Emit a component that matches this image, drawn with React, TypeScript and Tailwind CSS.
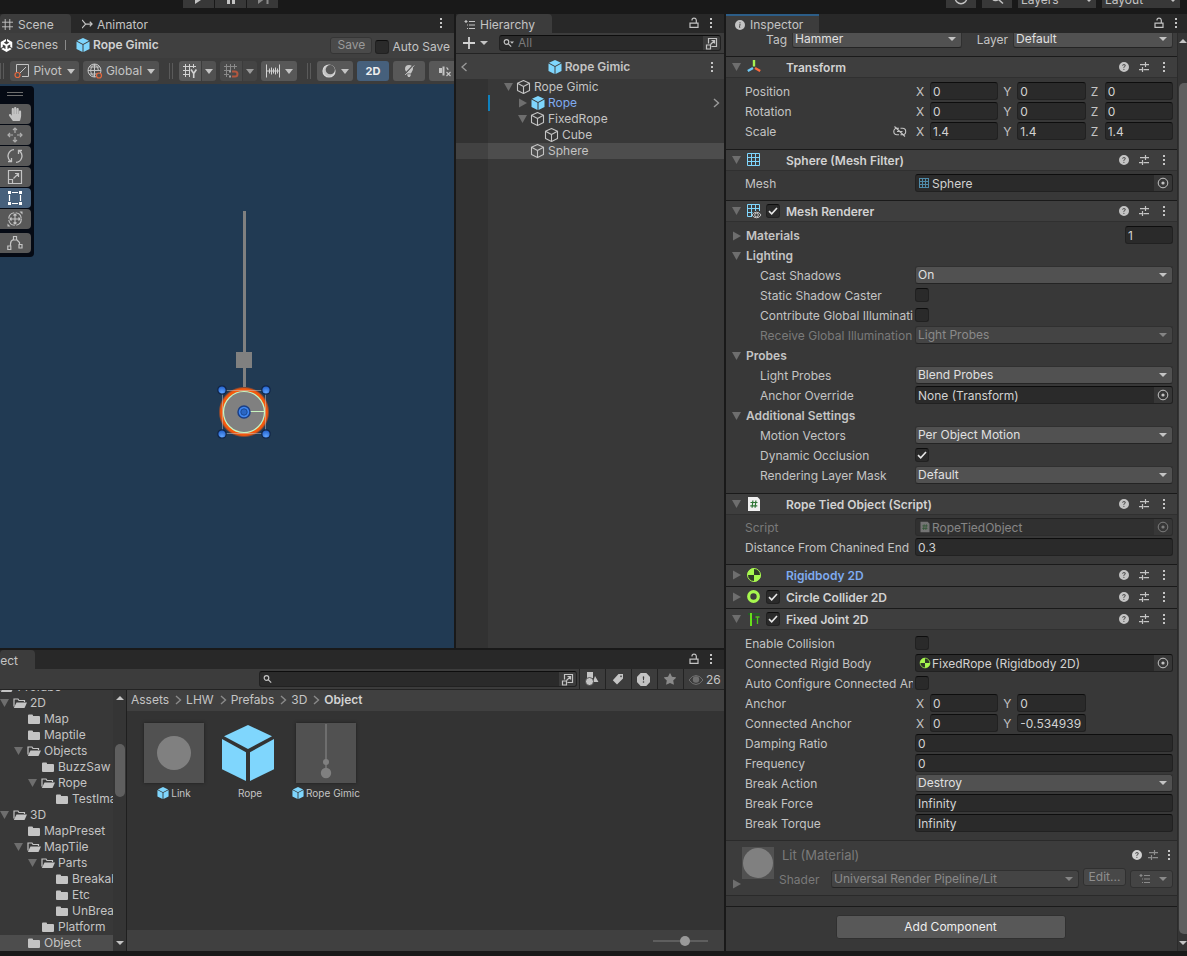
import { useId, useState, type ReactNode } from "react";
import clsx from "clsx";
import { BsExclamationOctagonFill, BsInfoCircleFill, BsQuestionCircleFill, BsStarFill } from "react-icons/bs";
import { FaHandPaper } from "react-icons/fa";
import { SiUnity } from "react-icons/si";

/* ---------- icons ---------- */

type IconProps = { className?: string };

const Caret = ({ className = "w-2 h-1" }: IconProps) => (
  <svg viewBox="0 0 8 4" className={className} fill="currentColor" preserveAspectRatio="none" aria-hidden>
    <path d="M0 0h8L4 4z" />
  </svg>
);

const Foldout = ({ open, className }: { open: boolean; className?: string }) => (
  <svg viewBox="0 0 10 10" className={clsx("size-2.5 shrink-0 text-[#6e6e6e]", className)} fill="currentColor" aria-hidden>
    {open ? <path d="M0 1h9L4.500 9z" /> : <path d="M1 .5v9l8-4.500z" />}
  </svg>
);

const PrefabCube = ({ className = "size-4" }: IconProps) => (
  <svg viewBox="0 0 52 56" className={clsx("shrink-0", className)} fill="#7fd6fd" aria-hidden>
    <path d="M26 0l24 11.300L26 24 2 11.300z" />
    <path d="M0 14l24 13.300V56L0 44.300z" />
    <path d="M52 14L28 27.300V56l24-11.700z" />
  </svg>
);

const ObjectCube = ({ className = "size-4" }: IconProps) => (
  <svg viewBox="0 0 16 16" className={clsx("shrink-0", className)} fill="none" stroke="#c4c4c4" strokeWidth="1.100" strokeLinejoin="round" aria-hidden>
    <path d="M7.500 1.500l6 2.700v7.300l-6 3-6-3V4.200z" />
    <path d="M1.500 4.200l6 3.300 6-3.300M7.500 7.500v7" />
  </svg>
);

const Folder = ({ open }: { open: boolean }) => (
  <svg viewBox="0 0 14 12" className="h-3 w-3.5 shrink-0" aria-hidden>
    {open ? (
      <>
        <path d="M1 9.500V2h4l1 1.500h5.500V5" fill="none" stroke="#c4c4c4" strokeWidth="1.200" />
        <path d="M3.500 5.500H14L11.500 11H.800z" fill="#c4c4c4" />
      </>
    ) : (
      <path d="M1 2.500q0-1 1-1h3q1 0 1 1v.5h6q1 0 1 1v6q0 1-1 1H2q-1 0-1-1z" fill="#c4c4c4" />
    )}
  </svg>
);

const Dots = ({ className }: IconProps) => (
  <svg viewBox="0 0 4 12" className={clsx("h-3 w-1 shrink-0", className)} fill="#c4c4c4" aria-hidden>
    <path d="M1 1h2v2H1zM1 5h2v2H1zM1 9h2v2H1z" />
  </svg>
);

const Lock = () => (
  <svg viewBox="0 0 10 12" className="h-3 w-2.5" fill="none" stroke="#c4c4c4" strokeWidth="1.200" aria-hidden>
    <path d="M1 6.100h8v4.300H1zM3 3.500V3q0-1.900 2-1.900T7.300 3v3" />
  </svg>
);

const Sliders = ({ className }: IconProps) => (
  <svg viewBox="0 0 12 12" className={clsx("size-3", className)} fill="none" stroke="#c4c4c4" strokeWidth="1.200" aria-hidden>
    <path d="M2 3.600h4.500M6.500 3.600H11M7.500 1v5M1 8.600h3.500M5.500 8.600H11M4.500 6v5" />
  </svg>
);

const Popout = () => (
  <svg viewBox="0 0 13 13" className="size-[13px]" fill="none" stroke="#c4c4c4" strokeWidth="1.200" aria-hidden>
    <path d="M3.500 6.500V1.500h8v8h-5M1.500 8h4v4h-4zM5.500 7.500l4-4M6.500 3.500h3v3" />
  </svg>
);

const Magnifier = ({ caret = false }: { caret?: boolean }) => (
  <svg viewBox="0 0 12 12" className="size-3 shrink-0" fill="none" stroke="#c4c4c4" strokeWidth="1.200" aria-hidden>
    <circle cx="3.500" cy="5" r="2.300" />
    <path d="M5.200 6.700l3 3" />
    {caret && <path d="M7 4.500h4l-2 2.300z" fill="#c4c4c4" stroke="none" />}
  </svg>
);

const TargetDot = () => (
  <svg viewBox="0 0 12 12" className="size-3" aria-hidden>
    <circle cx="6" cy="6" r="4.800" fill="none" stroke="#c4c4c4" />
    <circle cx="6" cy="6" r="1.600" fill="#c4c4c4" />
  </svg>
);

const GridGlyph = ({ className, color = "#7fd6fd" }: { className: string; color?: string }) => (
  <svg viewBox="0 0 14 14" className={className} fill="none" stroke={color} aria-hidden>
    <path d="M.5.5h12v12H.5zM.5 4.500h12M.5 8.500h12M4.500.5v12M8.500.5v12" />
  </svg>
);

const FineGrid = () => (
  <svg viewBox="0 0 10 10" className="mr-0.5 size-2.5" fill="none" stroke="#4f8aa8" aria-hidden>
    <path d="M.5 0v10M3.500 0v10M6.500 0v10M9.500 0v10M0 .5h10M0 3.500h10M0 6.500h10M0 9.500h10" />
  </svg>
);

const AxisIcon = () => (
  <svg viewBox="0 0 16 16" className="size-4" strokeWidth="2.400" fill="none" aria-hidden>
    <path d="M8 1v6.500" stroke="#a7f051" />
    <path d="M7 9L1.800 12" stroke="#6ec8f5" />
    <path d="M9 9l5.200 3" stroke="#ff6a3d" />
  </svg>
);

const RendererIcon = () => (
  <svg viewBox="0 0 16 16" className="size-4" fill="none" aria-hidden>
    <path d="M6 13.500H1.500V1.500h12v6.500M1.500 5.500h12M1.500 9.500h5M5.500 1.500v12M9.500 1.500v6.500" stroke="#7fd6fd" />
    <path d="M6 12q1.500-2.800 4.500-2.800T15 12q-1.500 2.800-4.500 2.800T6 12z" fill="#3e3e3e" stroke="#c4c4c4" />
    <circle cx="10.500" cy="12" r="1.800" stroke="#c4c4c4" />
  </svg>
);

const ScriptIcon = ({ className = "size-4", faded = false }: { className?: string; faded?: boolean }) => (
  <svg viewBox="0 0 16 16" className={className} aria-hidden>
    <path d="M2 1h9.500L14 3.500V15H2z" fill={faded ? "#b0b0b0" : "#f0f0f0"} />
    <path d="M4.500 6.500h7M4.300 9.800h7M6.900 4.500l-.8 7.300M9.900 4.500l-.8 7.300" stroke="#2f7536" strokeWidth="1.200" />
  </svg>
);

const BodyIcon = ({ className = "size-4" }: IconProps) => (
  <svg viewBox="0 0 16 16" className={className} aria-hidden>
    <circle cx="8" cy="8" r="6.500" fill="#303a28" stroke="#a7f84f" />
    <path d="M8 8V1.200A6.800 6.800 0 0 0 1.200 8zM8 8v6.800A6.800 6.800 0 0 0 14.800 8z" fill="#a7f84f" />
  </svg>
);

const RingIcon = () => (
  <svg viewBox="0 0 16 16" className="size-4" aria-hidden>
    <circle cx="7.500" cy="7.500" r="4.800" fill="none" stroke="#a7f84f" strokeWidth="3.200" />
  </svg>
);

const JointIcon = () => (
  <svg viewBox="0 0 16 16" className="size-4" fill="none" aria-hidden>
    <path d="M2 3h12M4 8.500h6" stroke="#0f7a10" />
    <path d="M5 2v13" stroke="#68e01c" strokeWidth="2" />
    <path d="M11.500 5.500v7.500M9.500 6h4" stroke="#4fc81a" strokeWidth="1.300" />
  </svg>
);

const UnlinkIcon = () => (
  <svg viewBox="0 0 14 12" className="h-3 w-3.5" fill="none" stroke="#c4c4c4" strokeWidth="1.100" aria-hidden>
    <path d="M6 2.300H4a3.200 3.200 0 0 0 0 6.400h2M7.500 2.300H9.500a3.200 3.200 0 0 1 0 6.400h-2M4 5.500h5.500M1.500.5L12 10.500" />
  </svg>
);

const ListIcon = () => (
  <svg viewBox="0 0 12 12" className="size-3" fill="none" stroke="currentColor" strokeWidth="1.200" aria-hidden>
    <path d="M.5 2.500h3M5 2.500h6M5 6h6M5 9.500h6M2 1v3M3 6h1M3 9.500h1" />
  </svg>
);

const SphereBall = ({ size }: { size: string }) => (
  <svg viewBox="0 0 20 20" className={size} aria-hidden>
    <circle cx="10" cy="10" r="10" fill="#808080" />
  </svg>
);

/* ---------- basic controls ---------- */

const fieldBox = "rounded-[3px] border border-[#212121] border-t-[#0d0d0d] bg-[#2a2a2a]";

function TextField({ id, value, label, className }: { id?: string; value: string; label?: string; className?: string }) {
  return (
    <input
      id={id}
      aria-label={label}
      defaultValue={value}
      className={clsx("h-[18px] min-w-0 px-[2px] text-[#d2d2d2] outline-none focus:border-[#3a79bb]", fieldBox, className)}
    />
  );
}

function Dropdown({ id, value, disabled, label, className }: { id?: string; value: string; disabled?: boolean; label?: string; className?: string }) {
  return (
    <div className={clsx("grid h-[18px] min-w-0 items-center", disabled ? "text-[#8a8a8a]" : "text-[#e0e0e0]", className)}>
      <select
        id={id}
        aria-label={label}
        disabled={disabled}
        className={clsx(
          "col-start-1 row-start-1 h-[18px] w-full appearance-none rounded-[3px] border border-[#303030] border-b-[#242424] pr-4 pl-[2px] leading-4 outline-none",
          disabled ? "bg-[#444444]" : "bg-[#515151]",
        )}
      >
        <option>{value}</option>
      </select>
      <Caret className={clsx("pointer-events-none col-start-1 row-start-1 mr-[6px] h-1 w-2 justify-self-end", disabled ? "text-[#858585]" : "text-[#c4c4c4]")} />
    </div>
  );
}

function Toggle({ id, checked = false, label }: { id?: string; checked?: boolean; label?: string }) {
  const [on, setOn] = useState(checked);
  return (
    <span className="grid size-3.5 shrink-0 place-items-center">
      <input
        id={id}
        type="checkbox"
        aria-label={label}
        checked={on}
        onChange={() => setOn(!on)}
        className={clsx("col-start-1 row-start-1 size-3.5 appearance-none", fieldBox)}
      />
      {on && (
        <svg viewBox="0 0 10 10" className="pointer-events-none col-start-1 row-start-1 size-2.5" fill="none" stroke="#e6e6e6" strokeWidth="1.600" aria-hidden>
          <path d="M1 5.200l2.700 2.600L9 2" />
        </svg>
      )}
    </span>
  );
}

function ObjectField({ id, value, icon, disabled }: { id?: string; value: string; icon?: ReactNode; disabled?: boolean }) {
  return (
    <div className={clsx("flex h-[18px] flex-1 items-center overflow-hidden", fieldBox, disabled && "opacity-50")}>
      {icon && <span className="ml-[3px] shrink-0">{icon}</span>}
      <input id={id} readOnly value={value} className={clsx("min-w-0 flex-1 bg-transparent pt-px text-[#d2d2d2] outline-none", icon ? "pl-px" : "pl-[2px]")} />
      <button aria-label={`Select ${value}`} className="grid h-full w-[18px] place-items-center bg-[#373737]">
        <TargetDot />
      </button>
    </div>
  );
}

/* ---------- inspector ---------- */

function Row({ label, nested, disabled, extra, children }: { label: string; nested?: boolean; disabled?: boolean; extra?: ReactNode; children: (id: string) => ReactNode }) {
  const id = useId();
  return (
    <div className="flex h-5 pr-1">
      <div className={clsx("flex w-[187px] shrink-0 items-center overflow-hidden", nested ? "pl-[34px]" : "pl-[19px]")}>
        <label htmlFor={id} className={clsx("flex-1 whitespace-nowrap", disabled ? "text-[#7a7a7a]" : "text-[#c4c4c4]")}>
          {label}
        </label>
        {extra}
      </div>
      <div className="ml-0.5 flex h-[18px] flex-1 items-center">{children(id)}</div>
    </div>
  );
}

function Vector({ id, label, values }: { id: string; label: string; values: string[] }) {
  return (
    <div className="grid flex-1 grid-cols-3 gap-1">
      {values.map((v, i) => (
        <div key={i} className="flex items-center">
          <span className="w-[15px] shrink-0 pt-0.5 pl-px">{"XYZ"[i]}</span>
          <TextField id={i === 0 ? id : undefined} label={`${label} ${"XYZ"[i]}`} value={v} className="flex-1" />
        </div>
      ))}
    </div>
  );
}

function GroupTitle({ title, open, children }: { title: string; open: boolean; children?: ReactNode }) {
  return (
    <div className="flex h-5 pr-1">
      <button className="flex flex-1 items-center pl-[6px] font-semibold">
        <Foldout open={open} className="mr-1" />
        {title}
      </button>
      {children}
    </div>
  );
}

type SectionProps = {
  title: string;
  icon: ReactNode;
  open?: boolean;
  enabled?: boolean;
  overridden?: boolean;
  body?: string;
  children?: ReactNode;
};

function Section({ title, icon, open = true, enabled, overridden, body = "pt-1 pb-[7px]", children }: SectionProps) {
  return (
    <section className="border-t border-[#1a1a1a]">
      <header className={clsx("flex h-[21px] items-center border-b bg-[#3e3e3e] pl-[6px]", open ? "border-[#303030]" : "border-[#3e3e3e]")}>
        <Foldout open={open} />
        <span className="ml-1 size-4">{icon}</span>
        <span className="ml-1 w-5">{enabled && <Toggle checked label={`Enable ${title}`} />}</span>
        <h2 className={clsx("flex-1 pt-0.5 font-semibold", overridden ? "text-[#7fabf0]" : "text-[#d2d2d2]")}>{title}</h2>
        <div className="flex items-center gap-2 pr-[7px] text-[#c4c4c4]">
          <button aria-label={`${title} help`} className="grid size-3 place-items-center">
            <BsQuestionCircleFill className="size-2.5" />
          </button>
          <button aria-label={`${title} presets`}>
            <Sliders />
          </button>
          <button aria-label={`${title} menu`} className="grid w-3 place-items-center">
            <Dots />
          </button>
        </div>
      </header>
      {children && <div className={body}>{children}</div>}
    </section>
  );
}

function Inspector() {
  return (
    <aside className="flex w-[461px] shrink-0 flex-col overflow-hidden bg-[#383838]">
      <div className="flex h-[19px] shrink-0 items-stretch bg-[#282828]">
        <button className="flex w-[93px] items-center gap-[5px] border-t-2 border-[#2c5d87] bg-[#3c3c3c] pl-[9px]">
          <BsInfoCircleFill className="size-2.5" />
          Inspector
        </button>
        <div className="ml-auto flex items-center gap-2.5 pr-[9px] pb-px">
          <button aria-label="Lock inspector"><Lock /></button>
          <button aria-label="Inspector menu"><Dots /></button>
        </div>
      </div>
      <div className="flex min-h-0 flex-1">
        <div className="min-w-0 flex-1 overflow-hidden border-r border-[#2b2b2b]">
          <div className="flex h-[23px] items-start overflow-hidden bg-[#3c3c3c] pr-1">
            <label htmlFor="tag" className="w-[66px] pr-[5px] text-right leading-[14px]">Tag</label>
            <Dropdown id="tag" value="Hammer" className="-mt-[3px] flex-1" />
            <label htmlFor="layer" className="w-[51px] pr-[5px] text-right leading-[14px]">Layer</label>
            <Dropdown id="layer" value="Default" className="-mt-[3px] w-[160px]" />
          </div>

          <Section title="Transform" icon={<AxisIcon />}>
            <Row label="Position">{(id) => <Vector id={id} label="Position" values={["0", "0", "0"]} />}</Row>
            <Row label="Rotation">{(id) => <Vector id={id} label="Rotation" values={["0", "0", "0"]} />}</Row>
            <Row label="Scale" extra={<span className="mr-[6px]"><UnlinkIcon /></span>}>
              {(id) => <Vector id={id} label="Scale" values={["1.4", "1.4", "1.4"]} />}
            </Row>
          </Section>

          <Section title="Sphere (Mesh Filter)" icon={<GridGlyph className="mt-px ml-px size-3.5" />} body="pt-[3px] pb-[6px]">
            <Row label="Mesh">{(id) => <ObjectField id={id} value="Sphere" icon={<FineGrid />} />}</Row>
          </Section>

          <Section title="Mesh Renderer" icon={<RendererIcon />} enabled>
            <GroupTitle title="Materials" open={false}>
              <TextField label="Materials count" value="1" className="w-12" />
            </GroupTitle>
            <GroupTitle title="Lighting" open />
            <Row label="Cast Shadows" nested>{(id) => <Dropdown id={id} value="On" className="flex-1" />}</Row>
            <Row label="Static Shadow Caster" nested>{(id) => <Toggle id={id} />}</Row>
            <Row label="Contribute Global Illumination" nested>{(id) => <Toggle id={id} />}</Row>
            <Row label="Receive Global Illumination" nested disabled>{(id) => <Dropdown id={id} value="Light Probes" disabled className="flex-1" />}</Row>
            <GroupTitle title="Probes" open />
            <Row label="Light Probes" nested>{(id) => <Dropdown id={id} value="Blend Probes" className="flex-1" />}</Row>
            <Row label="Anchor Override" nested>{(id) => <ObjectField id={id} value="None (Transform)" />}</Row>
            <GroupTitle title="Additional Settings" open />
            <Row label="Motion Vectors" nested>{(id) => <Dropdown id={id} value="Per Object Motion" className="flex-1" />}</Row>
            <Row label="Dynamic Occlusion" nested>{(id) => <Toggle id={id} checked />}</Row>
            <Row label="Rendering Layer Mask" nested>{(id) => <Dropdown id={id} value="Default" className="flex-1" />}</Row>
          </Section>

          <Section title="Rope Tied Object (Script)" icon={<ScriptIcon />} body="pt-[3px] pb-[6px]">
            <Row label="Script" disabled>{(id) => <ObjectField id={id} value="RopeTiedObject" disabled icon={<ScriptIcon className="size-3" faded />} />}</Row>
            <Row label="Distance From Chanined End">{(id) => <TextField id={id} value="0.3" className="flex-1" />}</Row>
          </Section>

          <Section title="Rigidbody 2D" icon={<BodyIcon />} open={false} overridden />
          <Section title="Circle Collider 2D" icon={<RingIcon />} open={false} enabled />

          <Section title="Fixed Joint 2D" icon={<JointIcon />} enabled body="pt-1 pb-[6px]">
            <Row label="Enable Collision">{(id) => <Toggle id={id} />}</Row>
            <Row label="Connected Rigid Body">{(id) => <ObjectField id={id} value="FixedRope (Rigidbody 2D)" icon={<BodyIcon className="size-3" />} />}</Row>
            <Row label="Auto Configure Connected Anchor">{(id) => <Toggle id={id} />}</Row>
            <Row label="Anchor">{(id) => <Vector id={id} label="Anchor" values={["0", "0"]} />}</Row>
            <Row label="Connected Anchor">{(id) => <Vector id={id} label="Connected Anchor" values={["0", "-0.534939"]} />}</Row>
            <Row label="Damping Ratio">{(id) => <TextField id={id} value="0" className="flex-1" />}</Row>
            <Row label="Frequency">{(id) => <TextField id={id} value="0" className="flex-1" />}</Row>
            <Row label="Break Action">{(id) => <Dropdown id={id} value="Destroy" className="flex-1" />}</Row>
            <Row label="Break Force">{(id) => <TextField id={id} value="Infinity" className="flex-1" />}</Row>
            <Row label="Break Torque">{(id) => <TextField id={id} value="Infinity" className="flex-1" />}</Row>
          </Section>

          <section className="flex h-14 border-y border-[#2a2a2a] bg-[#3c3c3c] pr-1 text-[#7a7a7a]">
            <div className="flex w-[53px] shrink-0 items-start pt-[6px] pl-[6px]">
              <Foldout open={false} className="mt-8" />
              <span className="grid size-8 place-items-center bg-[#515151]">
                <SphereBall size="size-[30px]" />
              </span>
            </div>
            <div className="flex flex-1 flex-col">
              <div className="flex h-7 items-center">
                <h2 className="flex-1 pl-[3px] text-[13px]">Lit (Material)</h2>
                <div className="flex items-center gap-[5px] pr-0.5 text-[#d2d2d2]">
                  <button aria-label="Material help"><BsQuestionCircleFill className="size-2.5" /></button>
                  <button aria-label="Material presets"><Sliders className="opacity-60" /></button>
                  <button aria-label="Material menu" className="ml-[3px]"><Dots /></button>
                </div>
              </div>
              <div className="flex h-5 items-center">
                <label htmlFor="shader" className="w-[52px] pt-0.5">Shader</label>
                <Dropdown id="shader" value="Universal Render Pipeline/Lit" disabled className="flex-1" />
                <button className="mx-1 -mt-1 h-[18px] w-[43px] rounded-[3px] border border-[#303030] bg-[#484848] leading-4 text-[#8f8f8f]">Edit...</button>
                <button aria-label="Shader list" className="flex h-[18px] w-[43px] items-center justify-between rounded-[3px] border border-[#303030] bg-[#444444] pr-[5px] pl-2 text-[#8a8a8a]">
                  <ListIcon />
                  <Caret />
                </button>
              </div>
            </div>
          </section>

          <div className="mt-[10px] flex justify-center border-t border-[#1a1a1a] pt-[8px] pr-0.5">
            <button className="h-6 w-[230px] rounded-[3px] border border-[#303030] bg-[#585858] text-[#eeeeee]">Add Component</button>
          </div>
        </div>
        <div className="flex w-[9px] shrink-0 flex-col items-center overflow-hidden bg-[#353535] pt-[6px] pb-[6px]">
          <Caret className="h-1 w-2 shrink-0 rotate-180 text-[#c4c4c4]" />
          <div className="mt-10 mb-[7px] ml-px w-full flex-1 rounded-l-[5px] bg-[#5f5f5f]" />
          <Caret className="h-1 w-2 shrink-0 text-[#c4c4c4]" />
        </div>
      </div>
    </aside>
  );
}

/* ---------- trees ---------- */

const indents = ["pl-0", "pl-3.5", "pl-7", "pl-10.5", "pl-14"];

type Node = { name: string; depth: number; open?: boolean; leaf?: boolean; prefab?: boolean; selected?: boolean };

const hierarchy: Node[] = [
  { name: "Rope Gimic", depth: 1, open: true },
  { name: "Rope", depth: 2, open: false, prefab: true },
  { name: "FixedRope", depth: 2, open: true },
  { name: "Cube", depth: 3, leaf: true },
  { name: "Sphere", depth: 2, leaf: true, selected: true },
];

const folders: Node[] = [
  { name: "2D", depth: 0, open: true },
  { name: "Map", depth: 1, leaf: true },
  { name: "Maptile", depth: 1, leaf: true },
  { name: "Objects", depth: 1, open: true },
  { name: "BuzzSaw", depth: 2, leaf: true },
  { name: "Rope", depth: 2, open: true },
  { name: "TestImage", depth: 3, leaf: true },
  { name: "3D", depth: 0, open: true },
  { name: "MapPreset", depth: 1, leaf: true },
  { name: "MapTile", depth: 1, open: true },
  { name: "Parts", depth: 2, open: true },
  { name: "Breakable", depth: 3, leaf: true },
  { name: "Etc", depth: 3, leaf: true },
  { name: "UnBreakable", depth: 3, leaf: true },
  { name: "Platform", depth: 2, leaf: true },
  { name: "Object", depth: 1, leaf: true, selected: true },
];

function Hierarchy() {
  return (
    <section className="flex w-[268px] shrink-0 flex-col bg-[#383838]">
      <div className="flex h-[19px] items-stretch bg-[#282828]">
        <button className="flex w-24 items-center gap-1 rounded-t-sm bg-[#3c3c3c] pt-0.5 pl-2">
          <ListIcon />
          Hierarchy
        </button>
        <div className="ml-auto flex items-center gap-2.5 pr-[11px] pb-px">
          <button aria-label="Lock hierarchy"><Lock /></button>
          <button aria-label="Hierarchy menu"><Dots /></button>
        </div>
      </div>
      <div className="flex h-[21px] items-center border-b border-[#232323] bg-[#3c3c3c] pr-[3px]">
        <button aria-label="Create" className="flex w-[43px] items-center gap-[5px] pl-[7px]">
          <svg viewBox="0 0 12 12" className="size-3" stroke="#d2d2d2" strokeWidth="1.800" aria-hidden>
            <path d="M6 0v12M0 6h12" />
          </svg>
          <Caret />
        </button>
        <div className={clsx("flex h-4 flex-1 items-center overflow-hidden pl-[3px]", fieldBox)}>
          <Magnifier caret />
          <input placeholder="All" aria-label="Search hierarchy" className="min-w-0 flex-1 bg-transparent pl-[3px] outline-none placeholder:text-[#7a7a7a]" />
          <button aria-label="Open search window" className="grid h-full w-[17px] place-items-center bg-[#3c3c3c]"><Popout /></button>
        </div>
      </div>
      <div className="flex h-[25px] items-center bg-[#404040] pr-[10px] pl-1 font-semibold">
        <button aria-label="Back">
          <svg viewBox="0 0 8 10" className="h-2.5 w-2" fill="none" stroke="#9a9a9a" strokeWidth="1.300" aria-hidden><path d="M6.500 1L2 5l4.500 4" /></svg>
        </button>
        <span className="flex flex-1 items-center justify-center gap-[3px]">
          <PrefabCube className="size-3.5" />
          Rope Gimic
        </span>
        <button aria-label="Prefab menu"><Dots /></button>
      </div>
      <ul className="flex flex-1 flex-col bg-[linear-gradient(to_right,#323232_32px,transparent_32px)]">
        {hierarchy.map((n) => (
          <li key={n.name} className={clsx("flex h-4", n.selected && "bg-[linear-gradient(to_right,#424242_32px,#4d4d4d_32px)]")}>
            <div
              className={clsx(
                "ml-8 flex flex-1 items-center",
                indents[n.depth],
                n.prefab && "text-[#7fabf0] shadow-[inset_2px_0_0_#0f81be]",
              )}
            >
              <span className="grid w-3.5 place-items-center">{!n.leaf && <Foldout open={!!n.open} />}</span>
              {n.prefab ? <PrefabCube className="h-3.5 w-4" /> : <ObjectCube />}
              <span className="ml-0.5 flex-1">{n.name}</span>
              {n.prefab && (
                <svg viewBox="0 0 8 10" className="mr-1 h-2.5 w-2" fill="none" stroke="#9a9a9a" strokeWidth="1.400" aria-hidden><path d="M2 1l4.500 4L2 9" /></svg>
              )}
            </div>
          </li>
        ))}
      </ul>
    </section>
  );
}

/* ---------- scene view ---------- */

const Grip = () => <span className="h-4 w-1 shrink-0 border-x border-[#5a5a5a]" />;

const toolButton = "flex h-5 shrink-0 items-center justify-center text-[#c4c4c4]";

function SceneToolbar() {
  return (
    <div className="flex h-[26px] items-center overflow-hidden bg-[#3c3c3c]">
      <Grip />
      <button className={clsx(toolButton, "ml-[6px] w-[69px] gap-[3px] rounded-[3px] bg-[#515151] text-[#b4b4b4]")}>
        <svg viewBox="0 0 16 16" className="size-4" fill="none" stroke="#c4c4c4" aria-hidden>
          <path d="M2.500 9V1.500h12v12H8M5.500 10.500l6.500-6.500" />
          <circle cx="3.500" cy="12" r="2.500" stroke="#e8683c" strokeWidth="1.200" />
        </svg>
        Pivot
        <Caret className="ml-0.5 h-[5px] w-2" />
      </button>
      <button className={clsx(toolButton, "ml-1 w-[76px] gap-[3px] rounded-[3px] bg-[#515151] text-[#b4b4b4]")}>
        <svg viewBox="0 0 16 16" className="size-4" fill="none" stroke="#c4c4c4" aria-hidden>
          <circle cx="7.500" cy="7.500" r="6.500" />
          <path d="M7.500 1v13M1 7.500h13M2.500 4h10M2.500 11h10M7.500 1q-4 3-4 6.500t4 6.500M7.500 1q4 3 4 6.500" />
          <circle cx="12" cy="12.500" r="2.500" fill="#515151" stroke="#e8683c" strokeWidth="1.200" />
        </svg>
        Global
        <Caret className="ml-0.5 h-[5px] w-2" />
      </button>
      <span className="ml-[10px] flex"><Grip /></span>
      <button aria-label="Grid axis" className={clsx(toolButton, "ml-[6px] w-[22px] rounded-l-[3px] bg-[#5a5a5a]")}>
        <svg viewBox="0 0 16 16" className="size-4" fill="none" stroke="#d2d2d2" aria-hidden>
          <path d="M1 3.500h13M1 7.500h7M1 11.500h7M3.500 1v13M7.500 1v13M11.500 1v4" />
          <path d="M9 6.500l2.700 4 2.700-4M11.700 10.500V15" strokeWidth="1.600" />
        </svg>
      </button>
      <button aria-label="Grid options" className={clsx(toolButton, "ml-px w-[14px] rounded-r-[3px] bg-[#515151]")}><Caret className="h-[5px] w-2" /></button>
      <button aria-label="Grid snapping" disabled className={clsx(toolButton, "ml-1 w-[22px] rounded-l-[3px] bg-[#4a4a4a]")}>
        <svg viewBox="0 0 16 16" className="size-4" fill="none" stroke="#8a8a8a" aria-hidden>
          <path d="M1 3.500h13M1 7.500h6M1 11.500h5M3.500 1v13M7.500 1v7M11.500 1v5" />
          <path d="M9 8.500h3a2.500 2.500 0 0 1 0 5H9" stroke="#b2573f" strokeWidth="2" />
          <path d="M6 8.500h2M6 13.500h2" stroke="#a0a0a0" strokeWidth="2" />
        </svg>
      </button>
      <button aria-label="Snap options" disabled className={clsx(toolButton, "ml-px w-[14px] rounded-r-[3px] bg-[#484848] opacity-70")}><Caret className="h-[5px] w-2" /></button>
      <button aria-label="Snap increment" className={clsx(toolButton, "ml-1 w-9 gap-[5px] rounded-[3px] bg-[#585858]")}>
        <svg viewBox="0 0 14 14" className="size-3.5" fill="none" stroke="#d2d2d2" aria-hidden>
          <path d="M.5.5v13M13.500.5v13M.5 7h13M3.500 4.500v5M5.500 3.500v7M7.500 4.500v5M9.500 3.500v7M11.500 4.500v5" />
        </svg>
        <Caret className="h-[5px] w-2" />
      </button>
      <span className="ml-[10px] flex"><Grip /></span>
      <button aria-label="Draw mode" className={clsx(toolButton, "ml-[6px] w-9 gap-[5px] rounded-[3px] bg-[#585858]")}>
        <svg viewBox="0 0 14 14" className="size-3.5" aria-hidden>
          <circle cx="7" cy="7" r="6" fill="#c4c4c4" stroke="#d8d8d8" strokeWidth="1.200" />
          <circle cx="8.300" cy="5.700" r="4.600" fill="#585858" />
        </svg>
        <Caret className="h-[5px] w-2" />
      </button>
      <button className={clsx(toolButton, "ml-1 w-8 rounded-[3px] bg-[#46607c] text-[11px] font-bold text-[#eeeeee]")}>2D</button>
      <button aria-label="Scene lighting" className={clsx(toolButton, "ml-1 w-8 rounded-[3px] bg-[#585858]")}>
        <svg viewBox="0 0 14 14" className="size-3.5" aria-hidden>
          <path d="M7 1a4 4 0 0 0-4 4c0 1.600 1.300 2.400 2 4.500h4C9.700 7.400 11 6.600 11 5a4 4 0 0 0-4-4zM5.300 10.200h3.400v1.300L7.800 13H6.200l-.9-1.500z" fill="#c4c4c4" />
          <path d="M11.500 1L2.500 10.500" stroke="#585858" strokeWidth="1.400" />
          <path d="M12.200 1.500L3.200 11" stroke="#c4c4c4" strokeWidth="1" />
        </svg>
      </button>
      <button aria-label="Scene audio" className={clsx(toolButton, "ml-1 w-8 rounded-[3px] bg-[#585858]")}>
        <svg viewBox="0 0 14 14" className="size-3.5" fill="none" stroke="#c4c4c4" aria-hidden>
          <path d="M2.500 4v5" strokeWidth="3" />
          <path d="M5.500 2.500v9" strokeWidth="2" />
          <path d="M8.500 8l4 4M12.500 8l-4 4M8.500 3.500q1.500 1 1.500 2.500" strokeWidth="1.200" />
        </svg>
      </button>
    </div>
  );
}

const sceneTools: { name: string; icon: ReactNode; active?: boolean }[] = [
  { name: "View", icon: <FaHandPaper className="size-3.5" /> },
  {
    name: "Move",
    icon: (
      <svg viewBox="0 0 16 16" className="size-4" fill="none" stroke="currentColor" strokeWidth="1.200" opacity=".8" aria-hidden>
        <path d="M8 1v5M8 10v5M1 8h5M10 8h5M6 3l2-2 2 2M6 13l2 2 2-2M3 6L1 8l2 2M13 6l2 2-2 2" />
      </svg>
    ),
  },
  {
    name: "Rotate",
    icon: (
      <svg viewBox="0 0 16 16" className="size-4" fill="none" stroke="currentColor" strokeWidth="1.300" aria-hidden>
        <path d="M7 1.600A6.400 6.400 0 0 0 3.500 13M9 14.400A6.400 6.400 0 0 0 12.500 3M1 13.500h3.500V10M15 2.500h-3.500V6" />
      </svg>
    ),
  },
  {
    name: "Scale",
    icon: (
      <svg viewBox="0 0 16 16" className="size-4" fill="none" stroke="currentColor" strokeWidth="1.200" aria-hidden>
        <path d="M1.500 1.500h13v13h-13zM1.500 10.500h4v4M6.500 9.500l5-5M8 4.500h3.500V8" />
      </svg>
    ),
  },
  {
    name: "Rect",
    active: true,
    icon: (
      <svg viewBox="0 0 16 16" className="size-4" fill="none" stroke="currentColor" aria-hidden>
        <path d="M5 2.500h6M5 13.500h6M2.500 5v6M13.500 5v6" strokeWidth="1.200" />
        <path d="M1 1h3v3H1zM12 1h3v3h-3zM1 12h3v3H1zM12 12h3v3h-3z" fill="currentColor" stroke="none" />
      </svg>
    ),
  },
  {
    name: "Transform",
    icon: (
      <svg viewBox="0 0 16 16" className="size-4" fill="none" stroke="currentColor" strokeWidth="1.100" aria-hidden>
        <circle cx="8" cy="8" r="6.300" strokeDasharray="8.300 1.600" />
        <path d="M8 3v10M3 8h10M6.500 4.500L8 3l1.500 1.500M6.500 11.500L8 13l1.500-1.500M4.500 6.500L3 8l1.500 1.500M11.500 6.500L13 8l-1.500 1.500" />
        <path d="M12.500.5h3v3zM.5 12.500v3h3z" fill="currentColor" stroke="none" />
      </svg>
    ),
  },
  {
    name: "Edit path",
    icon: (
      <svg viewBox="0 0 16 16" className="size-4" fill="none" stroke="currentColor" strokeWidth="1.200" aria-hidden>
        <path d="M6.500 1.500h3v3.500h-3zM.8 11h3v3.500h-3zM12 9.500h3V13h-3zM6.500 4.500Q3.500 5.500 3.500 9v2M9.500 4.500l3 3v2" />
      </svg>
    ),
  },
];

const Handle = ({ x, y }: { x: number; y: number }) => <circle cx={x} cy={y} r={4.2} fill="url(#handle)" stroke="#102445" strokeWidth="1.200" />;

function SceneView() {
  return (
    <section className="flex min-w-0 flex-1 flex-col overflow-hidden bg-[#3c3c3c]">
      <div className="flex h-[19px] shrink-0 items-stretch bg-[#282828]">
        <button className="flex w-[71px] items-center gap-[5px] rounded-t-sm bg-[#3c3c3c] pt-0.5 pl-[2px]">
          <svg viewBox="0 0 12 12" className="size-[11px]" stroke="#c4c4c4" fill="none" aria-hidden>
            <path d="M3.500 0v12M8.500 0v12M0 3.500h12M0 8.500h12" />
          </svg>
          Scene
        </button>
        <button className="flex items-center gap-1 pt-0.5 pl-[11px]">
          <svg viewBox="0 0 12 12" className="size-[11px]" stroke="#c4c4c4" strokeWidth="1.300" fill="none" aria-hidden>
            <path d="M0 1l4 4.500h7M0 10l4-4.500M8.500 3l2.500 2.500L8.500 8" />
          </svg>
          Animator
        </button>
        <button aria-label="Scene menu" className="mr-[11px] ml-auto pb-px"><Dots /></button>
      </div>
      <div className="flex h-[25px] shrink-0 items-center bg-[#404040] pr-1 pb-px">
        <a href="#scenes" className="flex items-center gap-[3px]"><SiUnity className="size-[13px] text-white" />Scenes</a>
        <span className="mx-[7px] h-2.5 w-px bg-[#8a8a8a]" />
        <a href="#rope-gimic" className="flex items-center gap-[3px] pl-[3px] font-semibold text-[#d2d2d2]">
          <PrefabCube className="h-3.5 w-3.5" />Rope Gimic
        </a>
        <button disabled className="ml-auto h-[17px] w-[42px] rounded-[3px] border border-[#353535] bg-[#4a4a4a] leading-[14px] text-[#9a9a9a]">Save</button>
        <label className="flex items-center gap-[3px] pt-[3px] pl-[3px]"><Toggle />Auto Save</label>
      </div>
      <SceneToolbar />
      <div className="relative flex-1 bg-[#213a53]">
        <svg viewBox="0 0 56 230" className="absolute top-[126px] left-[216px] h-[230px] w-14" aria-label="Rope with tied sphere">
          <defs>
            <radialGradient id="handle" cx="0.5" cy="0.8" r="0.8">
              <stop offset="0" stopColor="#5fa4ff" />
              <stop offset="1" stopColor="#1f5cc8" />
            </radialGradient>
            <radialGradient id="glow">
              <stop offset="0.84" stopColor="#ff5a0a" />
              <stop offset="0.92" stopColor="#ff5a0a" stopOpacity="0.9" />
              <stop offset="1" stopColor="#ff5a0a" stopOpacity="0" />
            </radialGradient>
          </defs>
          <path d="M27 1h3v176h-3zM20 142h16v16H20z" fill="#808080" />
          <circle cx="28" cy="202" r="25.500" fill="url(#glow)" />
          <circle cx="28" cy="202" r="21" fill="#808080" />
          <circle cx="28" cy="202" r="20.500" fill="none" stroke="#c8f5c0" strokeWidth="1.200" />
          <path d="M6.500 180.500h43v43h-43z" fill="none" stroke="#c8c8c8" strokeOpacity="0.5" />
          <path d="M34 201.500h15" stroke="#c8f5c0" />
          <Handle x={6} y={180} />
          <Handle x={50} y={180} />
          <Handle x={6} y={224} />
          <Handle x={50} y={224} />
          <circle cx="28" cy="202" r="6" fill="#3f86f0" stroke="#1a3f86" strokeWidth="1.500" />
          <circle cx="28" cy="202" r="3.200" fill="#2a66c4" stroke="#1b4a94" />
        </svg>
        <div className="absolute top-0.5 left-0 flex w-[34px] flex-col gap-px rounded-r bg-[#050a14] pr-[3px] pb-1">
          <span className="mt-[6px] mb-[7px] ml-[7px] h-1 w-4 border-y border-[#6e6e6e]" />
          {sceneTools.map((t) => (
            <button
              key={t.name}
              aria-label={t.name}
              className={clsx(
                "flex h-5 items-center justify-center rounded-r-sm pr-px last:mt-[3px]",
                t.active ? "bg-[#46607c] text-white" : "bg-[#585858] text-[#c4c4c4]",
              )}
            >
              {t.icon}
            </button>
          ))}
        </div>
      </div>
    </section>
  );
}

/* ---------- project browser ---------- */

const crumbs = ["Assets", "LHW", "Prefabs", "3D"];

function Tool({ label, children }: { label: string; children: ReactNode }) {
  return (
    <button aria-label={label} className="grid w-[26px] place-items-center border-l border-[#232323] pr-0.5 text-[#c4c4c4]">
      {children}
    </button>
  );
}

function Asset({ name, icon, children }: { name: string; icon?: boolean; children: ReactNode }) {
  return (
    <figure className="flex w-[76px] flex-col items-center">
      <div className="grid size-[60px] place-items-center">{children}</div>
      <figcaption className="mt-[3px] flex items-center gap-0.5 text-[10px] leading-[14px] whitespace-nowrap">
        {icon && <PrefabCube className="size-3" />}
        {name}
      </figcaption>
    </figure>
  );
}

function Project() {
  return (
    <section className="flex h-[301px] shrink-0 flex-col bg-[#333333]">
      <div className="flex h-[19px] items-stretch bg-[#282828]">
        <button className="flex w-[35px] items-center justify-end overflow-hidden rounded-t-sm bg-[#3c3c3c] pt-0.5 pr-[17px]">Project</button>
        <div className="ml-auto flex items-center gap-2.5 pr-[11px] pb-px">
          <button aria-label="Lock project"><Lock /></button>
          <button aria-label="Project menu"><Dots /></button>
        </div>
      </div>
      <div className="flex h-[21px] items-stretch justify-end border-b border-[#232323] bg-[#3c3c3c]">
        <div className={clsx("my-0.5 mr-0.5 flex w-[318px] items-center overflow-hidden pl-[3px]", fieldBox)}>
          <Magnifier />
          <input aria-label="Search assets" className="min-w-0 flex-1 bg-transparent pl-1 outline-none" />
          <button aria-label="Open search window" className="grid h-full w-[17px] place-items-center bg-[#3c3c3c]"><Popout /></button>
        </div>
        <Tool label="Search by type">
          <svg viewBox="0 0 14 14" className="size-3.5" fill="currentColor" aria-hidden>
            <path d="M2 0h6v6H2zM10 4l3.500 6H8z" />
            <circle cx="4.500" cy="9.500" r="4" stroke="#3c3c3c" strokeWidth=".8" />
          </svg>
        </Tool>
        <Tool label="Search by label">
          <svg viewBox="0 0 12 12" className="size-3" fill="currentColor" fillRule="evenodd" aria-hidden>
            <path d="M6.500 1H11v4.500L5 11.500.8 7.200zM9 2.500a.8.8 0 1 0 .01 0z" />
          </svg>
        </Tool>
        <Tool label="Import log"><BsExclamationOctagonFill className="size-[13px]" /></Tool>
        <Tool label="Favorites"><BsStarFill className="size-3 text-[#8a8a8a]" /></Tool>
        <button aria-label="Hidden packages" className="flex w-[41px] items-center gap-0.5 border-l border-[#232323] pt-px pl-1">
          <svg viewBox="0 0 16 12" className="h-3 w-4 shrink-0" aria-hidden>
            <path d="M1 6q3-4.500 7-4.500T15 6q-3 4.500-7 4.500T1 6z" fill="none" stroke="#6e6e6e" />
            <circle cx="8" cy="5.500" r="3.200" fill="#6e6e6e" />
          </svg>
          26
        </button>
      </div>
      <div className="flex min-h-0 flex-1">
        <div className="flex w-[113px] flex-col justify-end overflow-hidden bg-[#383838]">
          <div className="flex h-4 shrink-0 items-center"><Folder open />&nbsp;Prefabs</div>
          {folders.map((n, i) => (
            <div key={i} className={clsx("flex h-4 shrink-0", n.selected && "bg-[#4d4d4d]")}>
              <div className={clsx("-ml-0.5 flex items-center whitespace-nowrap", indents[n.depth])}>
                <span className="grid w-3.5 shrink-0 place-items-center">{!n.leaf && <Foldout open={!!n.open} />}</span>
                <span className="grid w-4 shrink-0 place-items-center"><Folder open={!n.leaf} /></span>
                <span className="ml-0.5">{n.name}</span>
              </div>
            </div>
          ))}
        </div>
        <div className="flex w-[14px] flex-col items-center border-r border-[#1f1f1f] bg-[#353535] py-[6px]">
          <Caret className="h-1 w-2 rotate-180 text-[#c4c4c4]" />
          <div className="mt-[44px] h-[53px] w-[10px] rounded-full bg-[#5f5f5f]" />
          <Caret className="mt-auto h-1 w-2 text-[#c4c4c4]" />
        </div>
        <div className="flex flex-1 flex-col">
          <nav className="flex h-[21px] items-center bg-[#404040] pb-px pl-1">
            {crumbs.map((c) => (
              <span key={c} className="flex items-center">
                <a href={`#${c}`}>{c}</a>
                <svg viewBox="0 0 8 10" className="mr-[4px] ml-[5px] h-2.5 w-2" fill="none" stroke="#8a8a8a" strokeWidth="1.400" aria-hidden><path d="M2 1l4.500 4L2 9" /></svg>
              </span>
            ))}
            <a href="#Object" className="font-semibold text-[#d2d2d2]">Object</a>
          </nav>
          <div className="flex flex-1 flex-wrap content-start pt-3 pl-[9px]">
            <Asset name="Link" icon>
              <span className="grid size-[60px] place-items-center bg-[#515151] shadow-[0_0_3px_#1f1f1f]"><SphereBall size="size-[34px]" /></span>
            </Asset>
            <Asset name="Rope">
              <PrefabCube className="mr-1 h-14 w-[52px]" />
            </Asset>
            <Asset name="Rope Gimic" icon>
              <svg viewBox="0 0 60 60" className="size-[60px] bg-[#515151] shadow-[0_0_3px_#1f1f1f]" aria-hidden>
                <path d="M29 1h2v44h-2z" fill="#6e6e6e" />
                <circle cx="30" cy="39" r="3" fill="#808080" />
                <circle cx="30" cy="50" r="5.200" fill="#808080" />
              </svg>
            </Asset>
          </div>
          <div className="flex h-[21px] items-center justify-end bg-[#404040] pr-4">
            <input
              type="range"
              aria-label="Icon size"
              defaultValue={60}
              className="h-[10px] w-[55px] appearance-none bg-[linear-gradient(#5e5e5e,#5e5e5e)] bg-[length:100%_2px] bg-center bg-no-repeat [&::-webkit-slider-thumb]:size-[10px] [&::-webkit-slider-thumb]:appearance-none [&::-webkit-slider-thumb]:rounded-full [&::-webkit-slider-thumb]:bg-[#999999]"
            />
          </div>
        </div>
      </div>
    </section>
  );
}

/* ---------- window ---------- */

const topButton = "flex h-5 items-center bg-[#383838] text-[#c4c4c4]";

function MainToolbar() {
  return (
    <header className="flex h-[14px] shrink-0 items-end pb-[6px] pl-[183px] pr-[7px]">
      <div className="flex gap-px">
        <button aria-label="Play" className={clsx(topButton, "w-[31px] justify-center")}>
          <svg viewBox="0 0 12 12" className="size-3" fill="currentColor" aria-hidden><path d="M2 0l9 6-9 6z" /></svg>
        </button>
        <button aria-label="Pause" className={clsx(topButton, "w-[31px] justify-center")}>
          <svg viewBox="0 0 12 12" className="size-3" fill="currentColor" aria-hidden><path d="M2 0h3v12H2zM7 0h3v12H7z" /></svg>
        </button>
        <button aria-label="Step" className={clsx(topButton, "w-[31px] justify-center")}>
          <svg viewBox="0 0 12 12" className="size-3" fill="#8a8a8a" aria-hidden><path d="M1 0l8 6-8 6zM9.500 0h2v12h-2z" /></svg>
        </button>
      </div>
      <div className="ml-auto flex gap-[6px]">
        <button aria-label="History" className={clsx(topButton, "w-[30px] justify-center")}>
          <svg viewBox="0 0 14 14" className="size-3.5" fill="none" stroke="currentColor" strokeWidth="1.400" aria-hidden><circle cx="7" cy="7" r="5.800" /><path d="M7 4v4h3" /></svg>
        </button>
        <button aria-label="Search" className={clsx(topButton, "w-[30px] justify-center")}>
          <svg viewBox="0 0 14 14" className="size-3.5" fill="none" stroke="currentColor" strokeWidth="1.500" aria-hidden><circle cx="5.500" cy="5.500" r="4" /><path d="M8.500 8.500l4.500 4" /></svg>
        </button>
        <button className={clsx(topButton, "w-[78px] justify-between pt-1 pr-[3px] pl-[3px]")}>Layers<Caret /></button>
        <button className={clsx(topButton, "w-[78px] justify-between pt-1 pr-[3px] pl-[3px]")}>Layout<Caret /></button>
      </div>
    </header>
  );
}

export default function App() {
  return (
    <div className="flex h-screen flex-col overflow-hidden bg-[#191919] pb-[5px] font-[Inter,sans-serif] text-[12px] leading-4 text-[#c4c4c4] select-none">
      <MainToolbar />
      <main className="flex min-h-0 flex-1 gap-0.5">
        <div className="flex min-w-0 flex-1 flex-col gap-0.5">
          <div className="flex min-h-0 flex-1 gap-0.5">
            <SceneView />
            <Hierarchy />
          </div>
          <Project />
        </div>
        <Inspector />
      </main>
    </div>
  );
}
